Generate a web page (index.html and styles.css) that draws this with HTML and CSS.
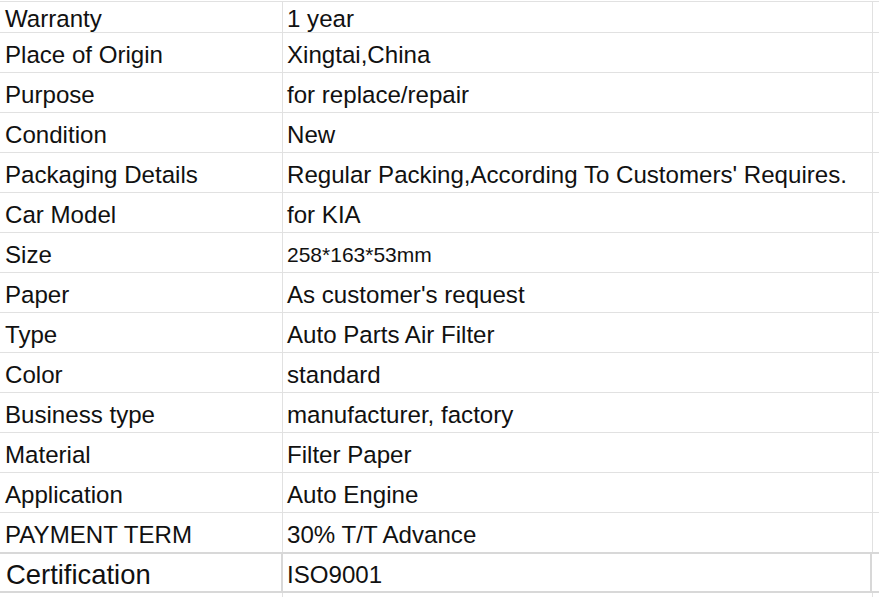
FILE: index.html
```html
<!DOCTYPE html>
<html>
<head>
<meta charset="utf-8">
<link rel="stylesheet" href="styles.css">
</head>
<body>
<div class="sheet">
  <div class="row first"><div class="cell k">Warranty</div><div class="cell v">1 year</div><div class="cell x"></div></div>
  <div class="row"><div class="cell k">Place of Origin</div><div class="cell v">Xingtai,China</div><div class="cell x"></div></div>
  <div class="row"><div class="cell k">Purpose</div><div class="cell v">for replace/repair</div><div class="cell x"></div></div>
  <div class="row"><div class="cell k">Condition</div><div class="cell v">New</div><div class="cell x"></div></div>
  <div class="row"><div class="cell k">Packaging Details</div><div class="cell v">Regular Packing,According To Customers' Requires.</div><div class="cell x"></div></div>
  <div class="row"><div class="cell k">Car Model</div><div class="cell v">for KIA</div><div class="cell x"></div></div>
  <div class="row"><div class="cell k">Size</div><div class="cell v small">258*163*53mm</div><div class="cell x"></div></div>
  <div class="row"><div class="cell k">Paper</div><div class="cell v">As customer's request</div><div class="cell x"></div></div>
  <div class="row"><div class="cell k">Type</div><div class="cell v">Auto Parts Air Filter</div><div class="cell x"></div></div>
  <div class="row"><div class="cell k">Color</div><div class="cell v">standard</div><div class="cell x"></div></div>
  <div class="row"><div class="cell k">Business type</div><div class="cell v">manufacturer, factory</div><div class="cell x"></div></div>
  <div class="row"><div class="cell k">Material</div><div class="cell v">Filter Paper</div><div class="cell x"></div></div>
  <div class="row"><div class="cell k">Application</div><div class="cell v">Auto Engine</div><div class="cell x"></div></div>
  <div class="row before-cert"><div class="cell k">PAYMENT TERM</div><div class="cell v">30% T/T Advance</div><div class="cell x"></div></div>
  <div class="row cert"><div class="cell k big">Certification</div><div class="cell v">ISO9001</div><div class="cell x"></div></div>
  <div class="row tail"><div class="cell k"></div><div class="cell v"></div><div class="cell x"></div></div>
</div>
</body>
</html>
```

FILE: styles.css
```css
html, body {
  margin: 0;
  padding: 0;
  background: #ffffff;
}

.sheet {
  width: 879px;
  height: 597px;
  overflow: hidden;
  padding-top: 1px;
  font-family: "Liberation Sans", Arial, sans-serif;
  color: #111111;
  box-sizing: border-box;
}

.row {
  display: grid;
  grid-template-columns: 283px 590px 1fr;
  height: 40px;
  border-bottom: 1px solid #e1e1e1;
  box-sizing: border-box;
}

.row.first {
  height: 32px;
  border-top: 1px solid #e1e1e1;
}

.cell {
  display: flex;
  align-items: flex-end;
  border-right: 1px solid #e1e1e1;
  padding: 0 0 4px 5px;
  font-size: 24.1px;
  line-height: 27px;
  white-space: nowrap;
  overflow: hidden;
  box-sizing: border-box;
}

.cell.v {
  padding-left: 4px;
}

.cell.x {
  border-right: none;
  padding: 0;
}

.row.first .cell {
  padding-bottom: 0;
}

.cell.small {
  font-size: 21px;
  line-height: 24px;
  padding-bottom: 5px;
}

.row.before-cert {
  height: 39px;
  border-bottom: none;
}

.row.cert {
  height: 41px;
  border-top: 2px solid #d8d8d8;
  border-bottom: 2px solid #d8d8d8;
  grid-template-columns: 283px 589px 1fr;
}

.row.cert .cell.k {
  border-right: 2px solid #d8d8d8;
  padding-left: 6px;
}

.row.cert .cell.v {
  border-right: 2px solid #d8d8d8;
  padding-left: 4px;
  padding-bottom: 3px;
}

.row.cert .cell.big {
  font-size: 27.4px;
  line-height: 31px;
  padding-bottom: 1px;
}

.row.tail {
  border-bottom: none;
}
```
